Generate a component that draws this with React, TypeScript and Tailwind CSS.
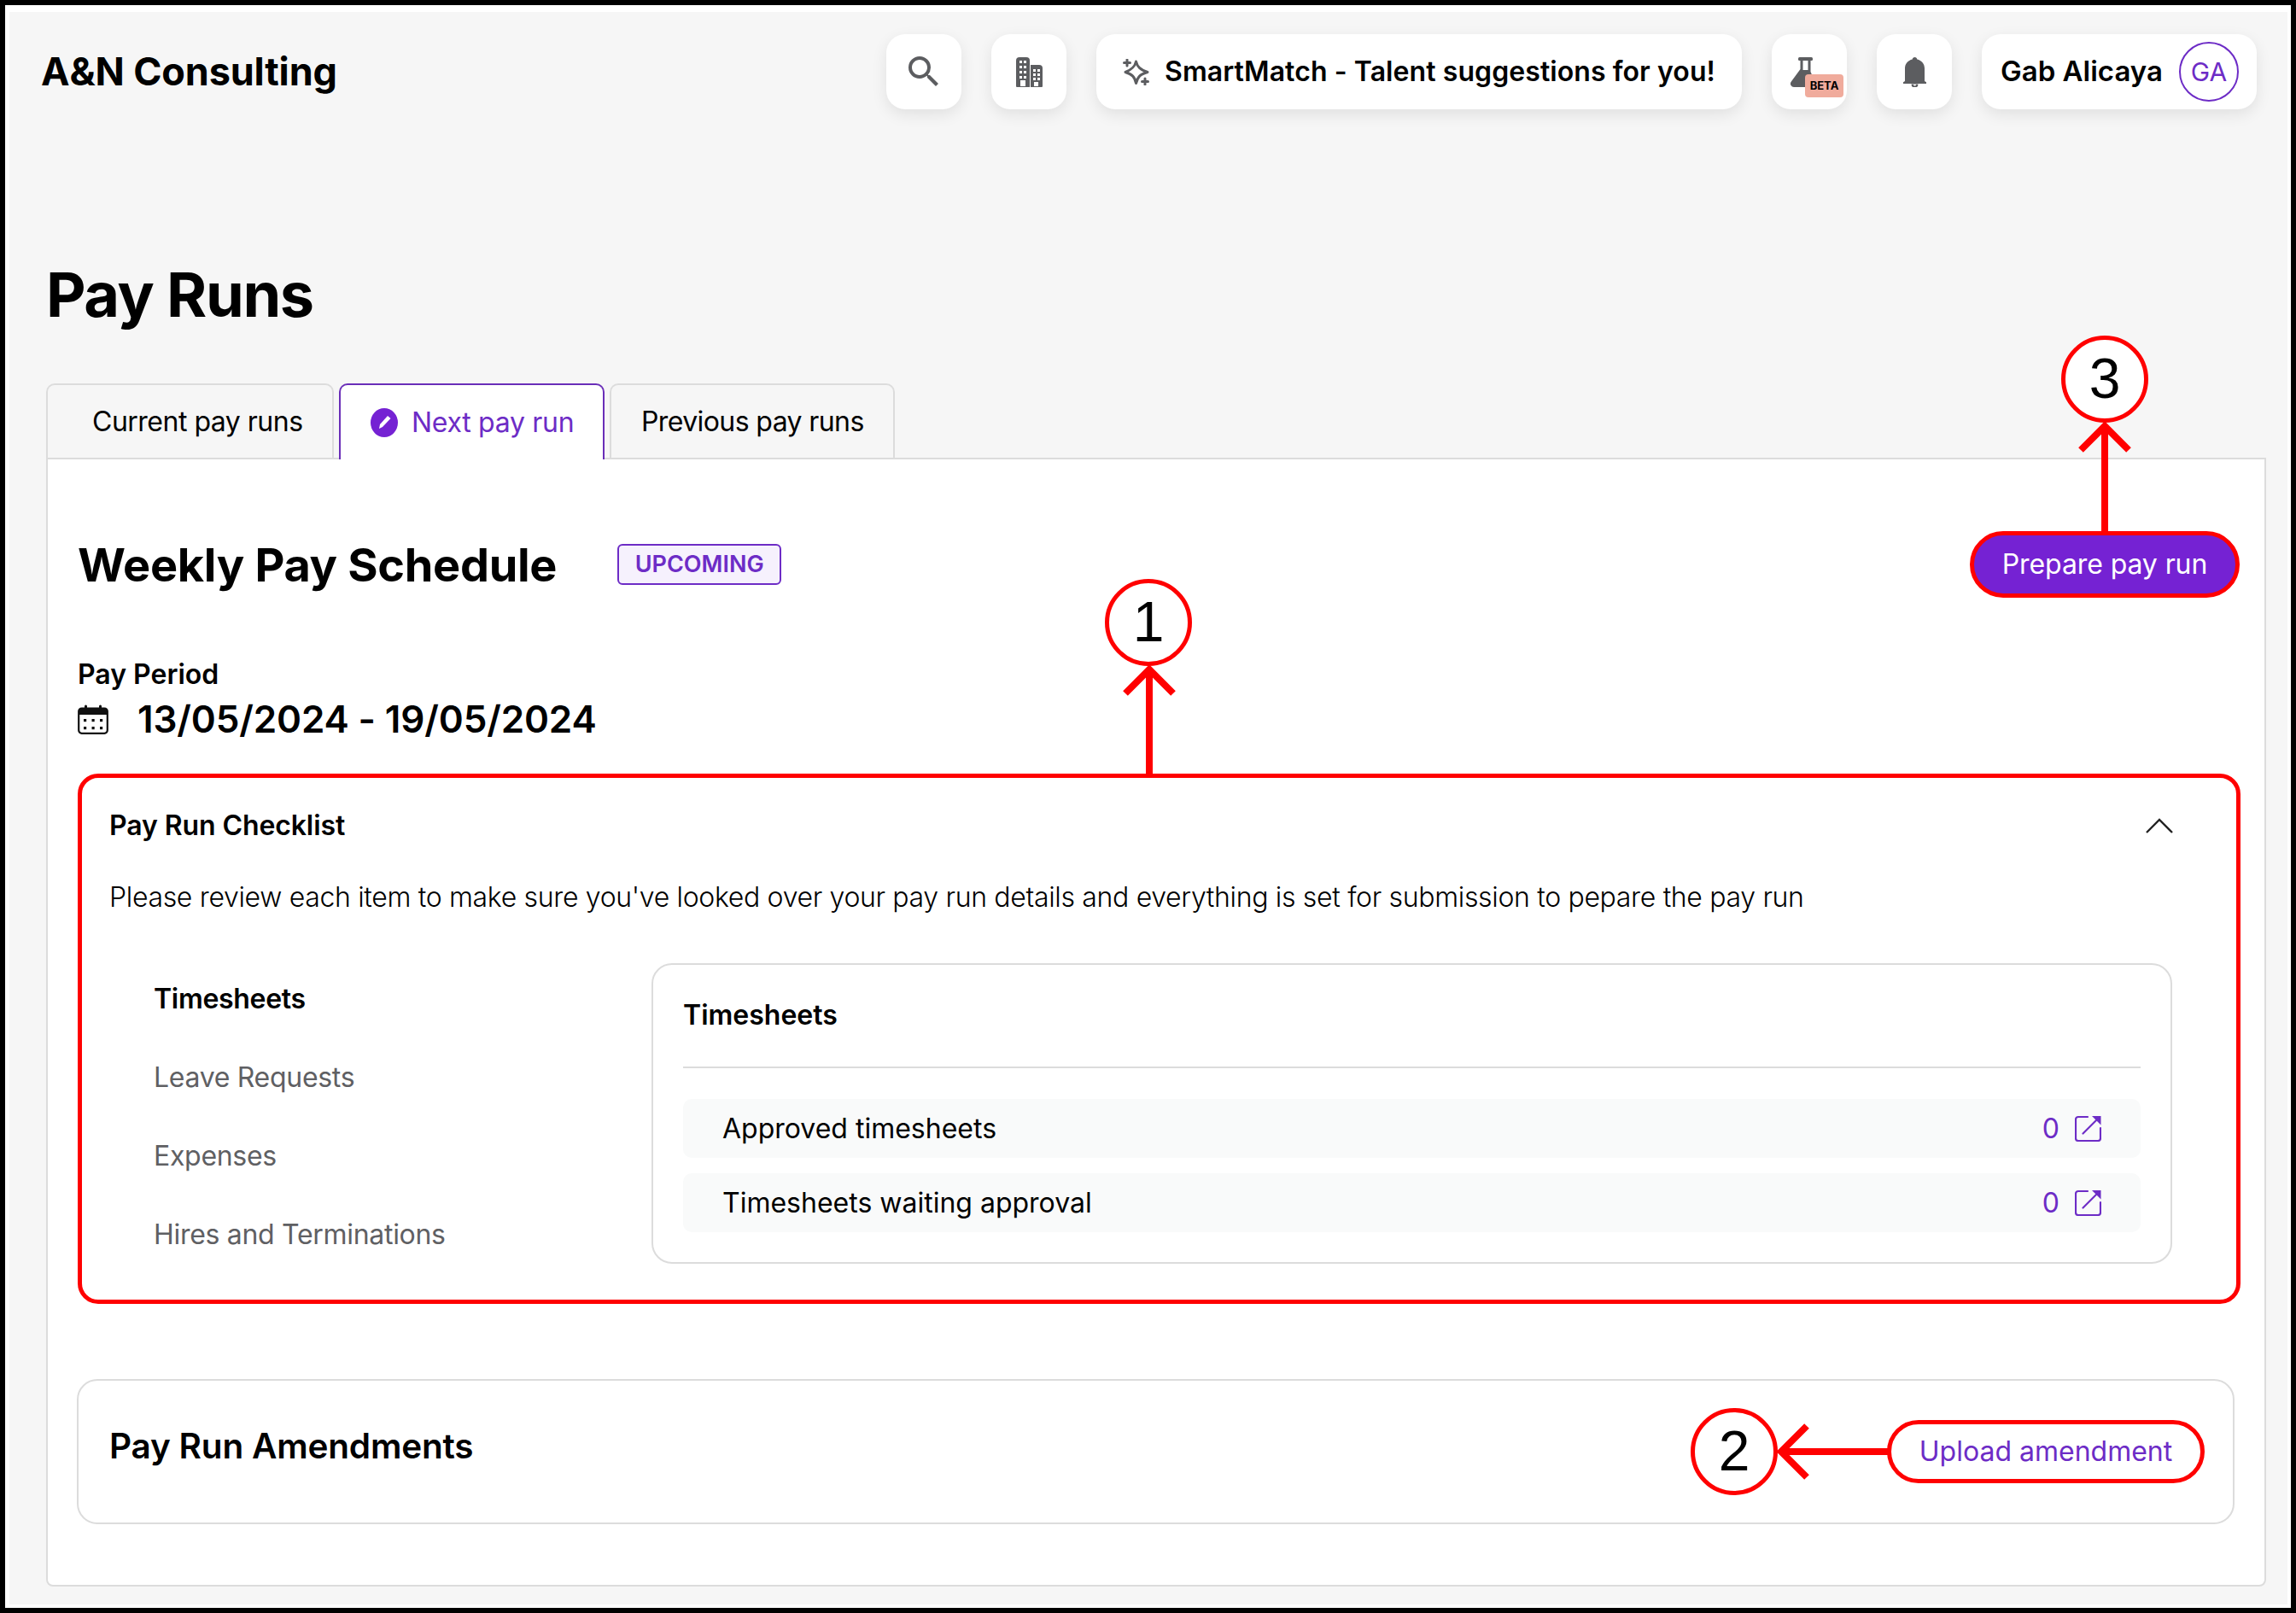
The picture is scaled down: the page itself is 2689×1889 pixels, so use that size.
import { MdSearch } from "react-icons/md";

const purple = "text-[#6d2cc6]";

function BuildingIcon() {
  return (
    <svg width="31" height="35" viewBox="0 0 31 35">
      <path d="M0 4a4 4 0 0 1 4-4h8a4 4 0 0 1 4 4v31H1a1 1 0 0 1-1-1z" fill="#5c5d60" />
      <path d="M17 9h10a4 4 0 0 1 4 4v21a1 1 0 0 1-1 1H17z" fill="#5c5d60" />
      {[4, 10, 16, 22].map((y) => (
        <g key={y} fill="#fff">
          <rect x="4" y={y} width="3" height="3" />
          <rect x="9" y={y} width="3" height="3" />
        </g>
      ))}
      {[14, 19, 24].map((y) => (
        <g key={y} fill="#fff">
          <rect x="20" y={y} width="3" height="3" />
          <rect x="25" y={y} width="3" height="3" />
        </g>
      ))}
      <rect x="5" y="27" width="6" height="7" fill="#fff" />
      <rect x="21" y="29" width="5" height="5" fill="#fff" />
    </svg>
  );
}

function SparkleIcon() {
  return (
    <svg width="31" height="31" viewBox="0 0 31 31" fill="none" stroke="#5c5d60" strokeWidth="3" strokeLinejoin="round" strokeLinecap="round">
      <path d="M15.5 3 C17 9 20 12.5 29 15.5 C20 18 17.5 21 15.5 28.5 C14 21 11 18 3 15.5 C11 12.5 14 9 15.5 3Z" />
      <path d="M5 1v7M1.500 4.500h7" strokeWidth="3" />
      <path d="M26 23v7M22.500 26.500h7" strokeWidth="3" />
    </svg>
  );
}

function FlaskIcon() {
  return (
    <svg width="30" height="35" viewBox="0 0 30 35" fill="#5c5d60">
      <rect x="9" y="0" width="17" height="4" rx="1.500" />
      <path d="M11.500 3h12v14l5.500 13a4 4 0 0 1-4 5H4a4 4 0 0 1-3.500-6l11-15z" />
      <path d="M14.500 4h6v11h-6z" fill="#fff" />
    </svg>
  );
}

function BellIcon() {
  return (
    <svg width="27" height="35" viewBox="0 0 27 35" fill="#5c5d60">
      <path d="M13.5 0c1.6 0 2.6 1 2.8 2.4C21.5 3.6 25 7.6 25 13v15l2 1.2V31H0v-1.8L2 28V13C2 7.6 5.500 3.600 10.700 2.400 10.900 1 11.900 0 13.500 0z" />
      <path d="M9.500 31.500h8a4 4 0 0 1-8 0zM12 32a1.500 1.500 0 0 0 3 0z" fillRule="evenodd" />
    </svg>
  );
}

function PencilCircleIcon() {
  return (
    <svg width="32" height="34" viewBox="0 0 32 34" className="shrink-0">
      <ellipse cx="16" cy="17" rx="16" ry="17" fill="#7522d3" />
      <path d="M10 24l1-5L20 9l3.500 3-9.500 10z" fill="#fff" />
    </svg>
  );
}

function CalendarIcon() {
  return (
    <svg width="36" height="35" viewBox="0 0 36 35" fill="none" className="shrink-0">
      <rect x="1.200" y="4.500" width="33.600" height="29.300" rx="3.500" stroke="#111" strokeWidth="2.200" />
      <path d="M1.200 8a3.500 3.500 0 0 1 3.500-3.500h26.600a3.500 3.500 0 0 1 3.500 3.500v4H1.200z" fill="#111" />
      <rect x="8" y="0.500" width="3" height="6" rx="1.500" fill="#111" />
      <rect x="25" y="0.500" width="3" height="6" rx="1.500" fill="#111" />
      {[17, 26].map((y) =>
        [7, 16.500, 26].map((x) => <rect key={`${x}-${y}`} x={x} y={y} width="3.200" height="3.200" fill="#111" />)
      )}
    </svg>
  );
}

function ExternalIcon() {
  return (
    <svg width="31" height="31" viewBox="0 0 31 31" fill="none" stroke="#6d2cc6" strokeWidth="2.200" className="shrink-0">
      <path d="M15 2H4a3 3 0 0 0-3 3v22a3 3 0 0 0 3 3h23a3 3 0 0 0 3-3V15" strokeLinecap="round" />
      <path d="M9.500 21.500 28 3" strokeLinecap="round" />
      <path d="M20 1h10.500v10.500z" fill="#6d2cc6" stroke="none" />
    </svg>
  );
}

function IconPill({ children }: { children: React.ReactNode }) {
  return (
    <div className="relative flex h-[88px] w-[88px] items-center justify-center rounded-[22px] bg-white shadow-[0_6px_18px_rgba(0,0,0,0.09)]">
      {children}
    </div>
  );
}

function Header() {
  return (
    <header className="flex items-start justify-between pt-[26px] pl-[37px] pr-[36px]">
      <div className="mt-[16px] text-[45px] leading-[56px] font-bold tracking-[-0.15px] text-black">A&amp;N Consulting</div>
      <div className="flex items-center gap-[35px]">
        <IconPill>
          <MdSearch size={48} color="#5c5d60" />
        </IconPill>
        <IconPill>
          <BuildingIcon />
        </IconPill>
        <div className="flex h-[88px] w-[756px] items-center gap-[18px] rounded-[22px] bg-white pl-[31px] shadow-[0_6px_18px_rgba(0,0,0,0.09)]">
          <SparkleIcon />
          <span className="text-[32px] font-semibold tracking-[0.08px] text-black">SmartMatch - Talent suggestions for you!</span>
        </div>
        <IconPill>
          <div className="-translate-x-[7px]">
            <FlaskIcon />
          </div>
          <span className="absolute top-[47px] left-[39px] flex h-[27px] w-[45px] items-center justify-center rounded-[4px] bg-[#f0ab9c] text-[13px] font-bold text-black">
            BETA
          </span>
        </IconPill>
        <IconPill>
          <BellIcon />
        </IconPill>
        <div className="flex h-[88px] w-[322px] items-center justify-between rounded-[22px] bg-white pr-[21px] pl-[22px] shadow-[0_6px_18px_rgba(0,0,0,0.09)]">
          <span className="text-[33px] font-semibold text-black">Gab Alicaya</span>
          <span className={`flex h-[70px] w-[70px] items-center justify-center rounded-full border-2 border-[#6d2cc6] text-[30px] ${purple}`}>
            GA
          </span>
        </div>
      </div>
    </header>
  );
}

function Tabs() {
  return (
    <div className="relative z-10 ml-[43px] mt-[64px] -mb-[2px] flex gap-[6px] text-[32px]">
      <div className="flex h-[87px] w-[337px] items-center rounded-t-[10px] border-2 border-b-0 border-[#dcdcdc] pl-[52px] tracking-[-0.5px] text-black">
        Current pay runs
      </div>
      <div className={`flex h-[89px] w-[311px] items-center gap-[16px] rounded-t-[10px] border-2 border-b-0 border-[#6a2eb8] bg-white pl-[35px] tracking-[-0.3px] ${purple}`}>
        <PencilCircleIcon />
        Next pay run
      </div>
      <div className="flex h-[87px] w-[334px] items-center rounded-t-[10px] border-2 border-b-0 border-[#dcdcdc] pl-[35px] tracking-[-0.6px] text-black">
        Previous pay runs
      </div>
    </div>
  );
}

function Row({ label }: { label: string }) {
  return (
    <div className="flex h-[69px] items-center rounded-[10px] bg-[#f9fafa] pr-[46px] pl-[46px] text-[32px] text-black">
      <span>{label}</span>
      <span className={`ml-auto mr-[18px] ${purple}`}>0</span>
      <ExternalIcon />
    </div>
  );
}

function Checklist() {
  return (
    <section className="mt-[37px] mr-[28px] rounded-[24px] border-[5px] border-[#ff0000] pl-[32px] pt-[36px] pb-[30px]">
      <div className="flex h-[40px] items-center justify-between pr-[74px]">
        <h3 className="text-[32px] font-semibold tracking-[-0.1px] text-black">Pay Run Checklist</h3>
        <svg width="32" height="18" viewBox="0 0 32 18" fill="none" stroke="#222" strokeWidth="2.400">
          <path d="M1 17 16 2l15 15" />
        </svg>
      </div>
      <p className="mt-[44px] h-[40px] text-[32px] leading-[40px] font-light tracking-[-0.33px] text-black">
        Please review each item to make sure you've looked over your pay run details and everything is set for submission to pepare the pay run
      </p>
      <div className="mt-[53px] flex items-start">
        <nav className="w-[635px] pl-[52px] text-[32px] tracking-[-0.3px] text-[#5f6063]">
          <div className="flex h-[92px] items-center font-semibold text-black">Timesheets</div>
          <div className="flex h-[92px] items-center">Leave Requests</div>
          <div className="flex h-[92px] items-center">Expenses</div>
          <div className="flex h-[92px] items-center">Hires and Terminations</div>
        </nav>
        <div className="mt-[4px] w-[1781px] rounded-[24px] border-2 border-[#dcdcdc] px-[35px] pt-[39px] pb-[35px]">
          <div className="flex h-[40px] items-center text-[32px] font-semibold text-black">Timesheets</div>
          <div className="mt-[40px] border-b-2 border-[#dcdcdc]" />
          <div className="mt-[36px] flex flex-col gap-[18px]">
            <Row label="Approved timesheets" />
            <Row label="Timesheets waiting approval" />
          </div>
        </div>
      </div>
    </section>
  );
}

function Panel() {
  return (
    <div className="mx-[25px] ml-[43px] rounded-b-[8px] border-2 border-[#dcdcdc] bg-white pl-[35px] pt-[84px] pb-[71px]">
      <div className="flex h-[78px] items-center pr-[29px]">
        <h2 className="text-[54px] font-bold tracking-[-0.3px] text-black">Weekly Pay Schedule</h2>
        <span className={`ml-[71px] flex h-[48px] w-[192px] items-center justify-center rounded-[6px] border-2 border-[#6d2cc6] bg-[#f6f1fd] text-[27px] font-semibold ${purple}`}>
          UPCOMING
        </span>
        <button className="ml-auto flex h-[78px] w-[316px] items-center justify-center rounded-full border-[5px] border-[#ff0000] bg-[#7522d3] text-[32px] tracking-[-0.1px] text-white">
          Prepare pay run
        </button>
      </div>
      <div className="mt-[70px] flex h-[40px] items-center text-[32px] font-semibold text-black">Pay Period</div>
      <div className="mt-[5px] flex h-[54px] items-center gap-[34px]">
        <CalendarIcon />
        <span className="text-[44px] font-semibold tracking-[-0.15px] text-black">13/05/2024 - 19/05/2024</span>
      </div>
      <Checklist />
      <section className="mt-[88px] -ml-px mr-[35px] flex h-[170px] items-center justify-between rounded-[24px] border-2 border-[#dcdcdc] pr-[33px] pl-[36px]">
        <h3 className="mb-[12px] text-[40.5px] font-semibold tracking-[-0.2px] text-black">Pay Run Amendments</h3>
        <button className={`flex h-[74px] w-[372px] items-center justify-center rounded-full border-[5px] border-[#ff0000] bg-white text-[32px] ${purple}`}>
          Upload amendment
        </button>
      </section>
    </div>
  );
}

function Marker({ n, className }: { n: number; className: string }) {
  return (
    <div className={`absolute flex h-[102px] w-[102px] items-center justify-center rounded-full border-[5px] border-[#ff0000] bg-white pb-[2px] text-[66px] text-black [font-family:'Liberation_Sans',Arial,sans-serif] ${className}`}>
      {n}
    </div>
  );
}

export default function App() {
  return (
    <div className="relative h-[1889px] w-[2689px] overflow-hidden [font-family:Inter,sans-serif]">
      <div className="h-full w-full border-[6px] border-black bg-white pt-[8px] pr-[4px] pb-[4px] pl-[5px]">
        <div className="h-full bg-[#f6f6f6]">
          <Header />
          <h1 className="mt-[177px] ml-[43px] h-[80px] text-[72px] leading-[80px] font-bold tracking-[-1.4px] text-black">Pay Runs</h1>
          <Tabs />
          <Panel />
        </div>
      </div>

      {/* Red callouts drawn over the page */}
      <svg className="absolute top-0 left-0" width="2689" height="1889" fill="none" stroke="#ff0000" strokeWidth="8">
        <path d="M2465 622V500M2437 527l28-28 28 28" />
        <path d="M1346 907V785M1318 812l28-28 28 28" />
        <path d="M2211 1700H2088M2116 1670l-30 30 30 30" />
      </svg>
      <Marker n={1} className="top-[678px] left-[1294px]" />
      <Marker n={2} className="top-[1649px] left-[1980px]" />
      <Marker n={3} className="top-[393px] left-[2414px]" />
    </div>
  );
}
